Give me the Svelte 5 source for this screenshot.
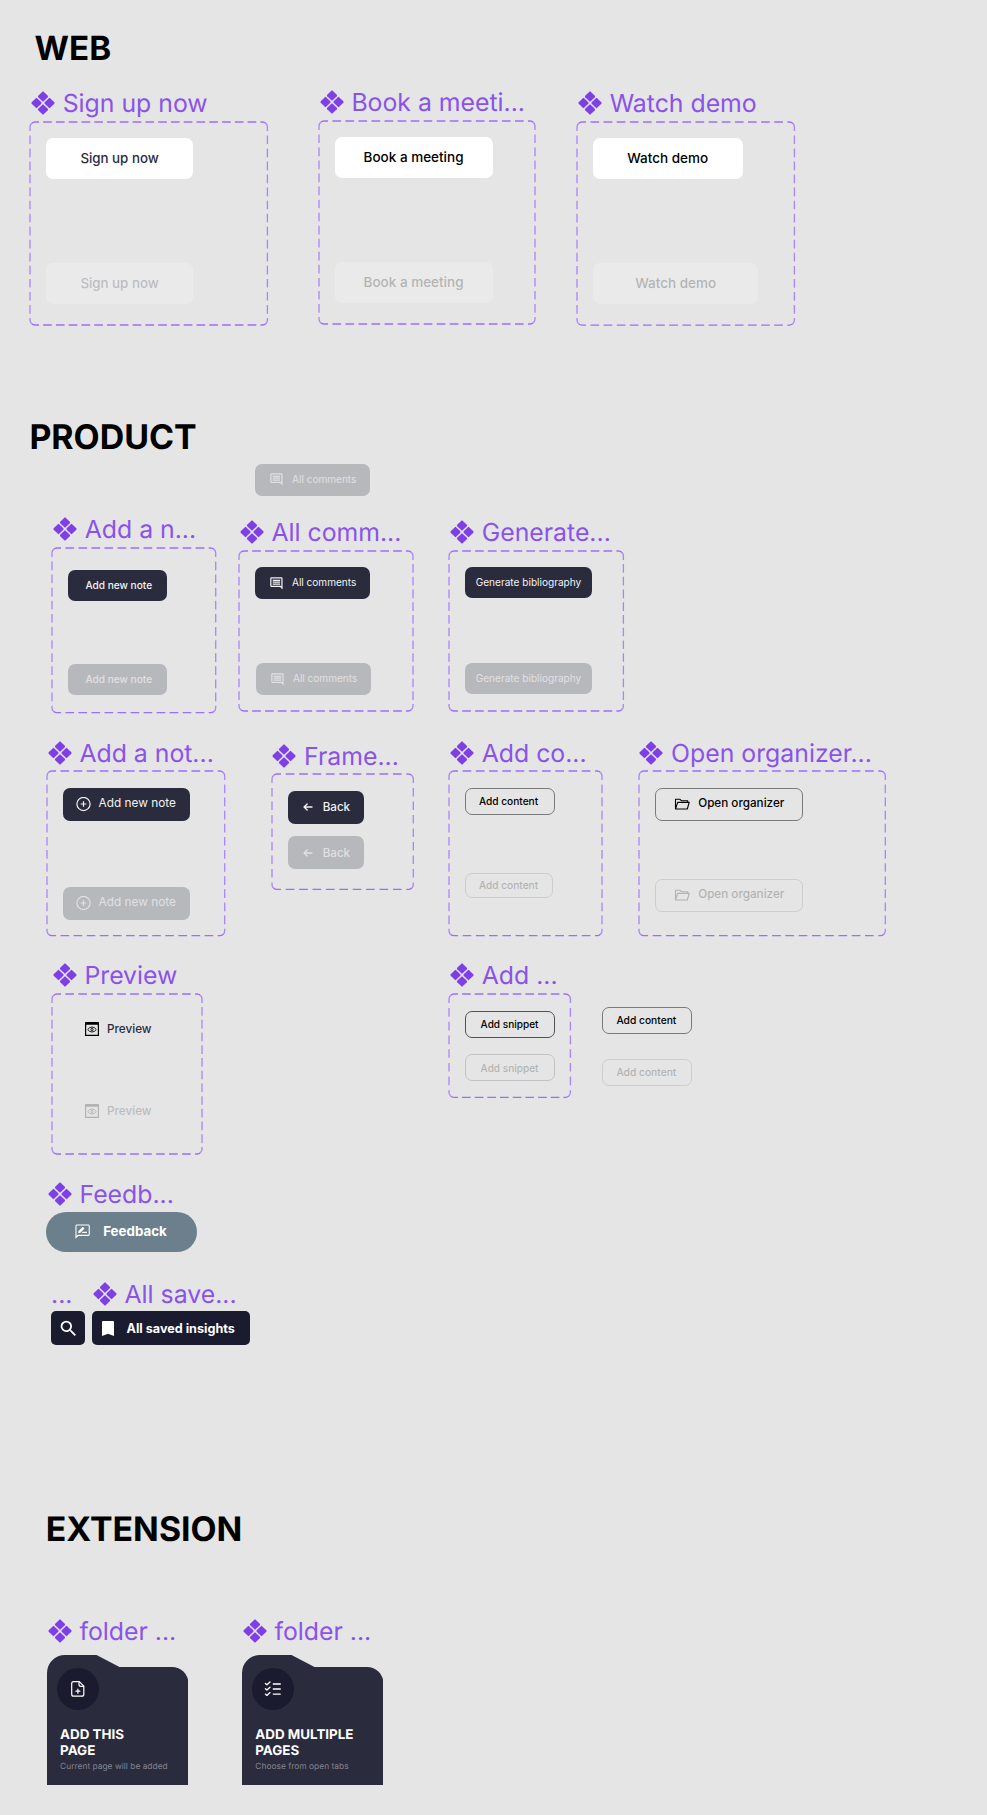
<script>
  const headings = [
    { text: 'WEB', x: 34.6, y: 28, fs: 33.2 },
    { text: 'PRODUCT', x: 29.4, y: 417, fs: 33.9 },
    { text: 'EXTENSION', x: 45.8, y: 1509, fs: 33.85 },
  ];

  const web = { kind: 'light', h: 41, fs: 13.5, wt: 500 };
  const comments = { kind: 'dark', w: 115, h: 32, icon: 'comment', pl: 13.8, gap: 8.1, fs: 10.05, wt: 400, lift: 1, text: 'All comments' };
  const note = { kind: 'dark', w: 99, h: 31, pl: 17, fs: 10.12, wt: 500, lift: 1, text: 'Add new note' };
  const biblio = { kind: 'dark', w: 127, h: 31.5, pl: 10.3, fs: 10.08, wt: 400, lift: 1, text: 'Generate bibliography' };
  const iconNote = { kind: 'dark', w: 127, h: 33, icon: 'plus', pl: 13, gap: 7.3, fs: 11.82, wt: 400, text: 'Add new note' };
  const back = { kind: 'dark', w: 76, h: 33, icon: 'arrow', pl: 15.3, gap: 9.4, fs: 11.62, wt: 500, lift: -1, text: 'Back' };
  const content = { kind: 'outline', w: 89.5, h: 27, pl: 12.7, fs: 10.12, wt: 500, text: 'Add content' };
  const organizer = { kind: 'outline', w: 148, h: 33, icon: 'folder', pl: 18, gap: 8.2, fs: 11.7, wt: 500, text: 'Open organizer' };
  const preview = { kind: 'plain', w: 100, h: 14, icon: 'preview', pl: 0, gap: 8, fs: 11.72, wt: 500, lift: -1, text: 'Preview' };
  const snippet = { kind: 'outline ink', w: 90, h: 27, pl: 14.3, fs: 10.05, wt: 500, text: 'Add snippet' };
  const freeContent = { ...content, w: 90, h: 27, pl: 13, fs: 10.26 };

  const off = (b, more = {}) => ({ ...b, off: true, ...more });

  // Component sets: frame box, label, inner padding and stacked variants
  const sets = [
    { x: 30.3, y: 121.5, w: 237.4, h: 203, label: 'Sign up now', ly: 103.3, pt: 16.5, pl: 16.1, gap: 84,
      kids: [{ ...web, w: 146.5, pl: 34, text: 'Sign up now', navy: true, fs: 13.3 }, { ...web, w: 146.5, pl: 34, text: 'Sign up now', navy: true, fs: 13.3, off: true }] },
    { x: 319, y: 120.7, w: 216, h: 203, label: 'Book a meeti...', ly: 102.3, pt: 16.3, pl: 16, gap: 84,
      kids: [{ ...web, w: 158, pl: 28.6, text: 'Book a meeting' }, { ...web, w: 158, pl: 28.6, text: 'Book a meeting', off: true }] },
    { x: 577.3, y: 121.6, w: 217.4, h: 203.1, label: 'Watch demo', ly: 103.3, pt: 16.4, pl: 16, gap: 84,
      kids: [{ ...web, w: 149.7, pl: 34, text: 'Watch demo' }, { ...web, w: 165, pl: 42, text: 'Watch demo', off: true }] },
    { x: 52.3, y: 548.4, w: 163.7, h: 164.7, label: 'Add a n...', ly: 529.3, pt: 21.2, pl: 16.1, gap: 63.4, kids: [note, off(note)] },
    { x: 239, y: 550.6, w: 174, h: 160, label: 'All comm...', ly: 532.3, pt: 16.4, pl: 16.3, gap: 64, kids: [comments, off(comments, { ml: 1 })] },
    { x: 449.3, y: 550.6, w: 174.4, h: 160, label: 'Generate...', ly: 532.3, pt: 16.4, pl: 16.1, gap: 64.5, kids: [biblio, off(biblio)] },
    { x: 47, y: 771.4, w: 177.7, h: 164.7, label: 'Add a not...', ly: 752.6, pt: 16.4, pl: 16.3, gap: 66, kids: [iconNote, off(iconNote)] },
    { x: 271.7, y: 774.4, w: 141.3, h: 115.4, label: 'Frame...', ly: 755.6, pt: 16.4, pl: 16.3, gap: 12.6, kids: [back, off(back)] },
    { x: 449.3, y: 771.4, w: 153, h: 164.7, label: 'Add co...', ly: 752.6, pt: 16.4, pl: 16, gap: 58.7, kids: [content, off(content, { w: 88, h: 24.5, lift: 1 })] },
    { x: 638.7, y: 771.4, w: 246.3, h: 164.7, label: 'Open organizer...', ly: 752.6, pt: 16.4, pl: 16.3, gap: 58, kids: [organizer, off(organizer)] },
    { x: 52, y: 994.3, w: 150, h: 160, label: 'Preview', ly: 975.3, pt: 27.7, pl: 33, gap: 68, kids: [preview, off(preview)] },
    { x: 449.3, y: 994.3, w: 121.4, h: 103.3, label: 'Add ...', ly: 975.3, pt: 16.4, pl: 16, gap: 16.6, kids: [snippet, off(snippet)] },
  ];

  const labels = [
    ...sets.map((s) => ({ text: s.label, x: s.x + 0.6, y: s.ly })),
    { text: 'Feedb...', x: 47.7, y: 1193.5 },
    { text: 'All save...', x: 92.7, y: 1293.5 },
    { text: 'folder ...', x: 47.7, y: 1631.4 },
    { text: 'folder ...', x: 242.7, y: 1631.4 },
    { text: '...', x: 51, y: 1293.5, bare: true },
  ];

  const loose = [
    { x: 255.4, y: 463.5, b: off(comments) },
    { x: 602.4, y: 1006.5, b: freeContent },
    { x: 602.4, y: 1059, b: off(freeContent) },
    { x: 46, y: 1212, b: { kind: 'pill', w: 151.3, h: 40, icon: 'review', pl: 28.3, gap: 11.7, fs: 13.35, wt: 700, text: 'Feedback' } },
    { x: 51.4, y: 1311.4, b: { kind: 'night', w: 34, h: 34, icon: 'search', pl: 6.6, gap: 0, fs: 12, wt: 600, text: '' } },
    { x: 92, y: 1311.4, b: { kind: 'night', w: 158.2, h: 34, icon: 'bookmark', pl: 10, gap: 12.5, fs: 12.62, wt: 700, lift: -1, text: 'All saved insights' } },
  ];

  const cards = [
    { x: 46.5, icon: 'page', title: ['ADD THIS', 'PAGE'], sub: 'Current page will be added' },
    { x: 241.7, icon: 'list', title: ['ADD MULTIPLE', 'PAGES'], sub: 'Choose from open tabs' },
  ];

  // Every side starts and ends on a full dash so that the corners stay closed
  const R = 5;
  const DASH = 8.67;
  const k = R * (1 - Math.SQRT1_2);
  function sides(w, h) {
    const n = (len) => {
      const count = Math.round((len + 1.3 - DASH) / 13);
      const gap = (len + 1.3 - DASH) / count - DASH;
      return `${DASH} ${gap}`;
    };
    return [
      { d: `M${k} ${k}A${R} ${R} 0 0 1 ${R} 0H${w - R}A${R} ${R} 0 0 1 ${w - k} ${k}`, dash: n(w), side: false },
      { d: `M${w - k} ${k}A${R} ${R} 0 0 1 ${w} ${R}V${h - R}A${R} ${R} 0 0 1 ${w - k} ${h - k}`, dash: n(h), side: true },
      { d: `M${k} ${h - k}A${R} ${R} 0 0 0 ${R} ${h}H${w - R}A${R} ${R} 0 0 0 ${w - k} ${h - k}`, dash: n(w), side: false },
      { d: `M${k} ${k}A${R} ${R} 0 0 0 0 ${R}V${h - R}A${R} ${R} 0 0 0 ${k} ${h - k}`, dash: n(h), side: true },
    ];
  }
</script>

{#snippet glyph(name)}
  {#if name === 'comment'}
    <svg width="14.8" height="14.8" viewBox="0 0 24 24" fill="currentColor"><path d="M22 4c0-1.100-.9-2-2-2H4c-1.100 0-2 .9-2 2v12c0 1.100.9 2 2 2h14l4 4V4zm-2 0v13.170L18.830 16H4V4h16zM6 12h12v2H6zm0-3h12v2H6zm0-3h12v2H6z" /></svg>
  {:else if name === 'plus'}
    <svg width="15" height="15" viewBox="0 0 15 15" fill="none" stroke="currentColor" stroke-width="1.2"><circle cx="7.500" cy="7" r="6.600" /><path d="M7.500 4.200v5.600M4.700 7h5.600" /></svg>
  {:else if name === 'arrow'}
    <svg width="10" height="10" viewBox="0 0 10 10" fill="none" stroke="currentColor" stroke-width="1.35" stroke-linecap="round" stroke-linejoin="round"><path d="M9 5H1M4.200 1.900 1 5l3.200 3.100" /></svg>
  {:else if name === 'folder'}
    <svg width="16" height="12" viewBox="0 0 16 12" fill="none" stroke="currentColor" stroke-width="1.100" stroke-linejoin="round"><path d="M1.500 11V1.200h4.300l1.500 1.500h6.400v1.700" /><path d="M1.500 11 3.700 4.400h11.500L13.300 11z" /></svg>
  {:else if name === 'preview'}
    <svg width="14" height="14" viewBox="0 0 14 14" fill="none" stroke="#000"><path d="M.6 1h12.800v12.400H.6z" stroke-width="1.200" /><path d="M0 .8Q0 0 .8 0h12.400q.8 0 .8.8v2H0z" fill="#000" stroke="none" /><path d="M2.700 7.500Q4.400 5 7 5t4.300 2.500Q9.600 10 7 10T2.700 7.500z" stroke-width=".9" /><circle cx="7" cy="7.500" r="1.100" stroke-width=".9" /></svg>
  {:else if name === 'review'}
    <svg width="17.200" height="17.200" viewBox="0 0 24 24" fill="currentColor"><path d="M20 2H4c-1.100 0-2 .9-2 2v18l4-4h14c1.100 0 2-.9 2-2V4c0-1.100-.9-2-2-2zm0 14.500H5.170L3.500 18V3.500h17v13zM10.500 14H18v-1.700h-5.800zm3.860-5.870c.2-.2.2-.51 0-.71l-1.770-1.770c-.2-.2-.51-.2-.71 0L6 11.530V14h2.470l5.890-5.870z" /></svg>
  {:else if name === 'search'}
    <svg width="21" height="21" viewBox="0 0 24 24" fill="currentColor"><path d="M15.500 14h-.79l-.28-.27A6.471 6.471 0 0 0 16 9.500 6.500 6.500 0 1 0 9.500 16c1.610 0 3.090-.59 4.230-1.570l.27.28v.79l5 4.990L20.490 19l-4.990-5zm-6 0C7.010 14 5 11.990 5 9.500S7.010 5 9.500 5 14 7.010 14 9.500 11.990 14 9.500 14z" /></svg>
  {:else if name === 'bookmark'}
    <svg width="12" height="15" viewBox="0 0 12 15" fill="currentColor"><path d="M0 .9Q0 0 .9 0h10.200q.9 0 .9.9V15l-6-2.300L0 15z" /></svg>
  {:else if name === 'page'}
    <svg width="16" height="18" viewBox="0 0 16 18" fill="none" stroke="currentColor" stroke-width="1.200" stroke-linecap="round" stroke-linejoin="round"><path d="M9.300 1.600H3.600Q1.700 1.600 1.700 3.600v10.600q0 2 1.900 2h8.300q1.900 0 1.900-2V6.200z" /><path d="M9 1.800v2.700q0 1.900 1.900 1.900h2.700M7.900 9.200v4M5.900 11.200h4" /></svg>
  {:else}
    <svg width="18" height="18" viewBox="0 0 18 18" fill="none" stroke="currentColor" stroke-width="1.300" stroke-linecap="round" stroke-linejoin="round"><path d="m1.400 3.500 1.500 1.300L6 2M1.400 8.800l1.500 1.300L6 7.300M1.400 14.100l1.500 1.300L6 12.600M9.300 4h7M9.300 9h7M9.300 14.100h7" /></svg>
  {/if}
{/snippet}

{#snippet button(b)}
  <button
    class="btn {b.kind}"
    class:off={b.off}
    class:navy={b.navy}
    aria-label={b.text || b.icon}
    style="width:{b.w}px;height:{b.h}px;padding-left:{b.pl}px;gap:{b.gap ?? 0}px;margin-left:{b.ml ?? 0}px;font-size:{b.fs}px;font-weight:{b.wt}"
  >
    {#if b.icon}{@render glyph(b.icon)}{/if}
    {#if b.text}<span style="padding-bottom:{Math.max(b.lift ?? 0, 0)}px;padding-top:{Math.max(-(b.lift ?? 0), 0)}px">{b.text}</span>{/if}
  </button>
{/snippet}

<main>
  {#each headings as t}
    <h1 style="left:{t.x}px;top:{t.y}px;font-size:{t.fs}px">{t.text}</h1>
  {/each}

  {#each sets as s}
    <section style="left:{s.x}px;top:{s.y}px;width:{s.w}px;height:{s.h}px;padding:{s.pt}px 0 0 {s.pl}px;gap:{s.gap}px">
      <svg class="frame" width={s.w} height={s.h}>
        {#each sides(s.w, s.h) as p}
          <path d={p.d} stroke-dasharray={p.dash} class:side={p.side} />
        {/each}
      </svg>
      {#each s.kids as b}{@render button(b)}{/each}
    </section>
  {/each}

  {#each labels as l}
    <div class="label" style="left:{l.x}px;top:{l.y - 15}px">
      {#if !l.bare}
        <svg width="24" height="24" viewBox="-12 -12 24 24">
          {#each [[0, -6.5], [6.5, 0], [0, 6.5], [-6.5, 0]] as [cx, cy]}
            <rect x="-3.850" y="-3.850" width="7.700" height="7.700" rx=".9" transform="translate({cx} {cy}) rotate(45)" />
          {/each}
        </svg>
      {/if}
      <span>{l.text}</span>
    </div>
  {/each}

  {#each loose as l}
    <div class="item" style="left:{l.x}px;top:{l.y}px">{@render button(l.b)}</div>
  {/each}

  {#each cards as c}
    <article style="left:{c.x}px">
      <svg class="shape" width="141.500" height="130" viewBox="0 0 141.500 130">
        <path d="M0 130V18A18 18 0 0 1 18 0H49.500L72.500 12H125A16.500 16.500 0 0 1 141.500 28.500V130z" fill="#2a2b3d" />
      </svg>
      <div class="disc">{@render glyph(c.icon)}</div>
      <h2>{c.title[0]}<br />{c.title[1]}</h2>
      <p>{c.sub}</p>
    </article>
  {/each}
</main>

<style>
  :global(body) {
    margin: 0;
    background: #e5e5e5;
  }

  main {
    position: relative;
    width: 987px;
    height: 1815px;
    overflow: hidden;
    background: #e5e5e5;
    font-family: Inter, sans-serif;
    text-rendering: geometricPrecision;
  }

  h1 {
    position: absolute;
    margin: 0;
    line-height: 42px;
    font-weight: 700;
    color: #000;
    white-space: nowrap;
  }

  section {
    position: absolute;
    box-sizing: border-box;
    display: flex;
    flex-direction: column;
    align-items: flex-start;
  }

  .frame {
    position: absolute;
    left: 0;
    top: 0;
    overflow: visible;
    fill: none;
    stroke: #9f6dfb;
    stroke-width: 1.3;
    stroke-dashoffset: 0.8;
  }

  .frame .side {
    stroke: #ab85f6;
  }

  .label {
    position: absolute;
    display: flex;
    align-items: center;
    gap: 7.8px;
    height: 30px;
    font-size: 24.8px;
    line-height: 30px;
    color: #8a53e8;
    white-space: nowrap;
  }

  .label svg {
    fill: #7f3fe6;
  }

  .item {
    position: absolute;
  }

  .btn {
    box-sizing: border-box;
    display: flex;
    flex: none;
    align-items: center;
    border: 0;
    padding: 0;
    border-radius: 7px;
    font-family: inherit;
    line-height: 1;
    color: #fff;
    white-space: nowrap;
    background: none;
    text-align: left;
  }

  .btn svg {
    flex: none;
    display: block;
  }

  .light {
    background: #fff;
    color: #000;
  }

  .light.navy,
  .plain {
    color: #2a2b3d;
  }

  .dark {
    background: #2a2b3d;
    color: #f2f2f4;
  }

  .outline {
    border: 1px solid #7b7b7b;
    color: #000;
  }

  .outline.ink {
    border-color: #50505c;
  }

  .pill {
    border-radius: 20px;
    background: #6b808c;
  }

  .night {
    border-radius: 5px;
    background: #1a1b2e;
  }

  .off {
    opacity: 0.22;
  }

  .dark.off {
    opacity: 0.99;
    background: #b7b8bc;
    color: #e0e0e2;
  }

  article {
    position: absolute;
    top: 1655.400px;
    box-sizing: border-box;
    width: 141.500px;
    height: 130px;
    padding: 12.300px 0 0 10.300px;
    color: #fff;
  }

  .shape {
    position: absolute;
    left: 0;
    top: 0;
  }

  .disc {
    position: relative;
    display: flex;
    align-items: center;
    justify-content: center;
    width: 42px;
    height: 42px;
    border-radius: 50%;
    background: #1a1b2e;
  }

  h2 {
    position: relative;
    margin: 17.500px 0 0 3.300px;
    font-size: 13.400px;
    line-height: 16px;
    font-weight: 700;
  }

  p {
    position: relative;
    margin: 3px 0 0 3.300px;
    font-size: 8.420px;
    line-height: 10px;
    color: #85858f;
    white-space: nowrap;
  }
</style>
